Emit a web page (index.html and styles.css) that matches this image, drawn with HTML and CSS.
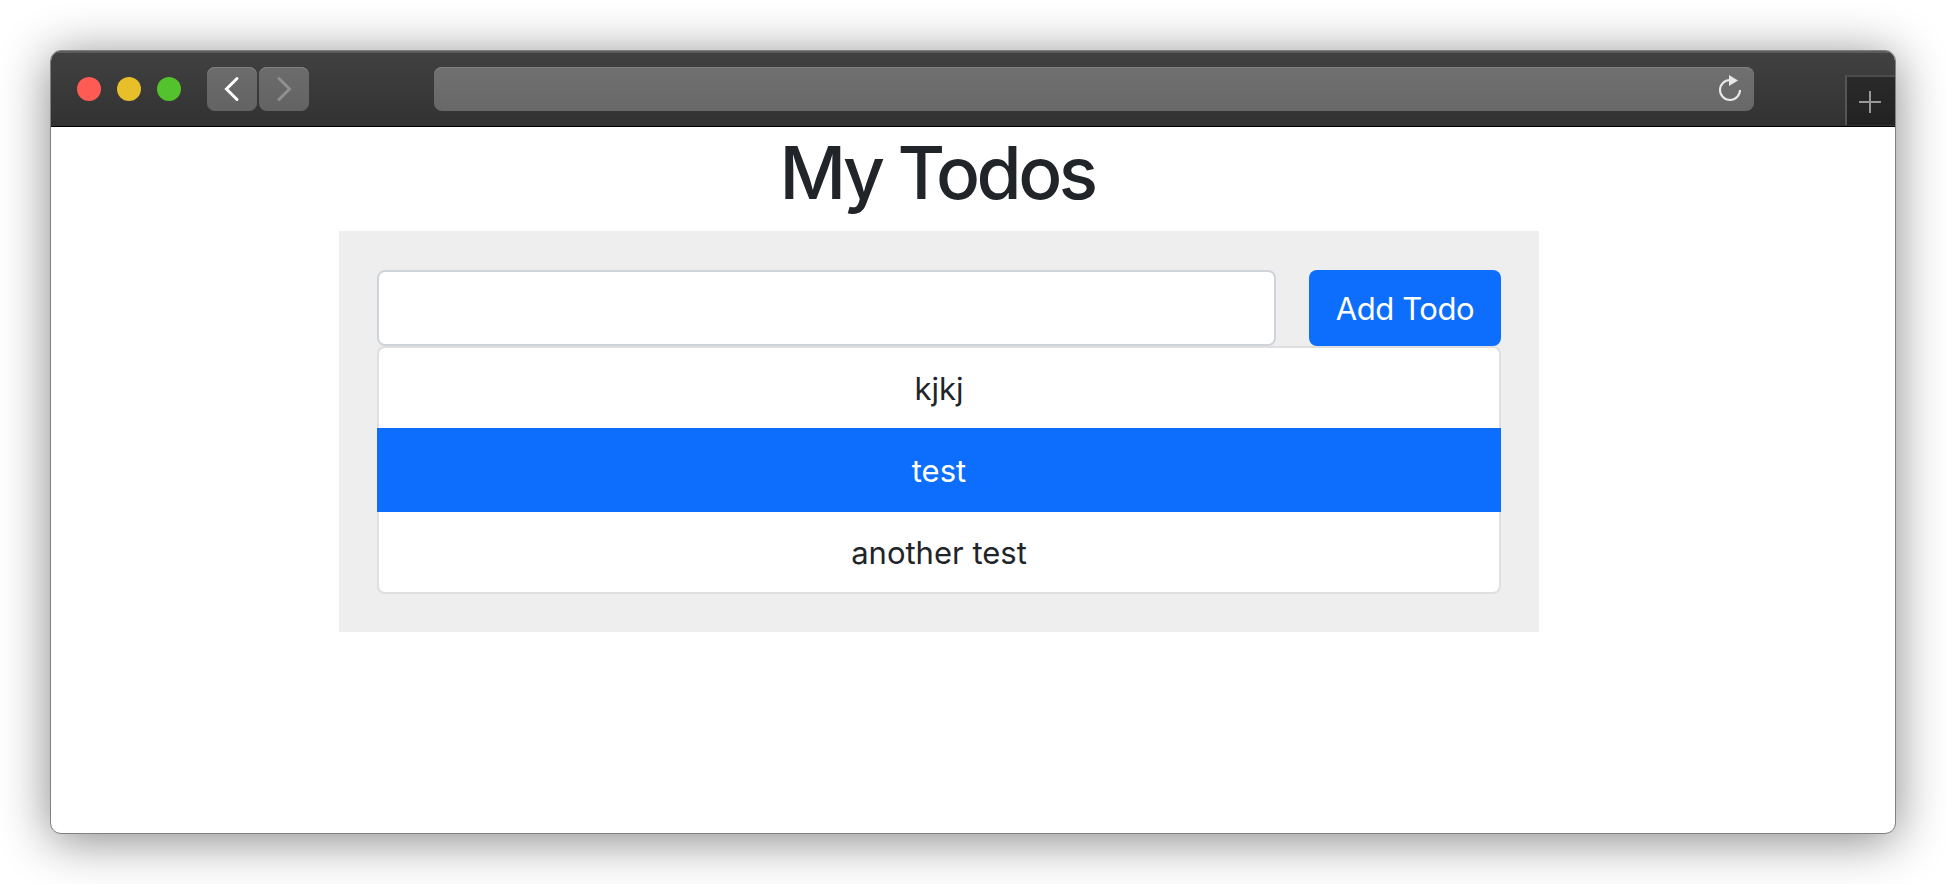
FILE: index.html
```html
<!DOCTYPE html>
<html lang="en">
<head>
<meta charset="utf-8">
<title>My Todos</title>
<link rel="stylesheet" href="styles.css">
</head>
<body>
<div class="window">
  <header class="toolbar">
    <div class="lights"><span class="light red"></span><span class="light yellow"></span><span class="light green"></span></div>
    <nav class="nav">
      <button class="nav-button" aria-label="Back"><svg width="50" height="44" viewBox="0 0 50 44"><path d="M30 11.5 19.5 22 30 32.5" fill="none" stroke="#fff" stroke-width="3" stroke-linecap="round"/></svg></button>
      <button class="nav-button" aria-label="Forward"><svg width="50" height="44" viewBox="0 0 50 44"><path d="M20 11.5 30.5 22 20 32.5" fill="none" stroke="#909090" stroke-width="3" stroke-linecap="round"/></svg></button>
    </nav>
    <div class="address"><svg width="26" height="30" viewBox="0 0 26 30"><path d="M23 15A10 10 0 1 1 13 5" fill="none" stroke="#e8e8e8" stroke-width="2.1"/><path d="M12 0v11l9-5.5z" fill="#e8e8e8"/></svg></div>
    <button class="new-tab" aria-label="New tab"><svg width="22" height="22" viewBox="0 0 22 22"><path d="M11 0v22M0 11h22" stroke="#989898" stroke-width="2"/></svg></button>
  </header>
  <main class="page">
    <h1 class="title">My Todos</h1>
    <section class="card">
      <form class="entry">
        <input class="entry-input" type="text" aria-label="Todo">
        <button class="entry-button" type="button">Add Todo</button>
      </form>
      <ul class="list">
        <li class="item">kjkj</li>
        <li class="item active">test</li>
        <li class="item">another test</li>
      </ul>
    </section>
  </main>
</div>
</body>
</html>
```
FILE: styles.css
```css
* { box-sizing: border-box; }
body {
  margin: 0;
  height: 884px;
  padding: 50px;
  overflow: hidden;
  background: #fff;
  color: #212529;
  font-family: Inter, "Liberation Sans", sans-serif;
}
button { border: 0; padding: 0; font: inherit; }
svg { display: block; }
.window {
  height: 784px;
  border: 1px solid #808080;
  border-radius: 11px;
  overflow: hidden;
  background: #fff;
  box-shadow: 0 6px 50px rgba(0, 0, 0, .48);
}
.toolbar {
  display: flex;
  align-items: flex-start;
  height: 76px;
  padding: 16px 0 0 26px;
  border-bottom: 1px solid #000;
  background: linear-gradient(#414141, #323232);
  box-shadow: inset 0 2px #5c5c5c;
}
.lights { display: flex; gap: 16px; padding-top: 10px; }
.light { width: 24px; height: 24px; border-radius: 50%; }
.red { background: #ff5b54; }
.yellow { background: #e6bf2a; }
.green { background: #53c22c; }
.nav { display: flex; gap: 2px; margin-left: 26px; }
.nav-button, .address {
  height: 44px;
  border-radius: 8px;
  background: linear-gradient(#6c6c6c, #636363);
  box-shadow: inset 0 1px #808080;
}
.nav-button { width: 50px; }
.address {
  display: flex;
  justify-content: flex-end;
  width: 1320px;
  margin-left: 125px;
  padding: 8px 11px 0 0;
  background: linear-gradient(#707070, #686868);
}
.new-tab {
  display: flex;
  align-items: center;
  justify-content: center;
  width: 50px;
  height: 50px;
  margin: 8px 0 0 auto;
  padding: 2px 2px 0 0;
  border-top: 2px solid #4c4c4c;
  border-left: 2px solid #555;
  background: linear-gradient(#2a2a2a, #222);
}
.page { width: 1488px; padding-left: 288px; }
.title {
  margin: 0;
  height: 104px;
  padding: 1px 4px 0 0;
  text-align: center;
  font-size: 73px;
  line-height: 90px;
  font-weight: 500;
  letter-spacing: -3.5px;
}
.card { height: 401px; padding: 39px 38px 38px; background: #eee; }
.entry { display: flex; justify-content: space-between; height: 76px; }
.entry-input {
  width: 899px;
  border: 2px solid #ced4da;
  border-radius: 8px;
  background: #fff;
}
.entry-button {
  width: 192px;
  border-radius: 8px;
  background: #0d6efd;
  color: #fff;
  font-size: 31px;
  letter-spacing: -.4px;
}
.list {
  height: 248px;
  margin: 0;
  padding: 0;
  list-style: none;
  font-size: 31px;
}
.item {
  display: flex;
  align-items: center;
  justify-content: center;
  height: 82px;
  border: 2px solid #dfdfdf;
  background: #fff;
}
.item:first-child { border-radius: 8px 8px 0 0; border-bottom: 0; }
.item:last-child { border-radius: 0 0 8px 8px; border-top: 0; }
.active { height: 84px; border-color: #0d6efd; background: #0d6efd; color: #fff; }
```
